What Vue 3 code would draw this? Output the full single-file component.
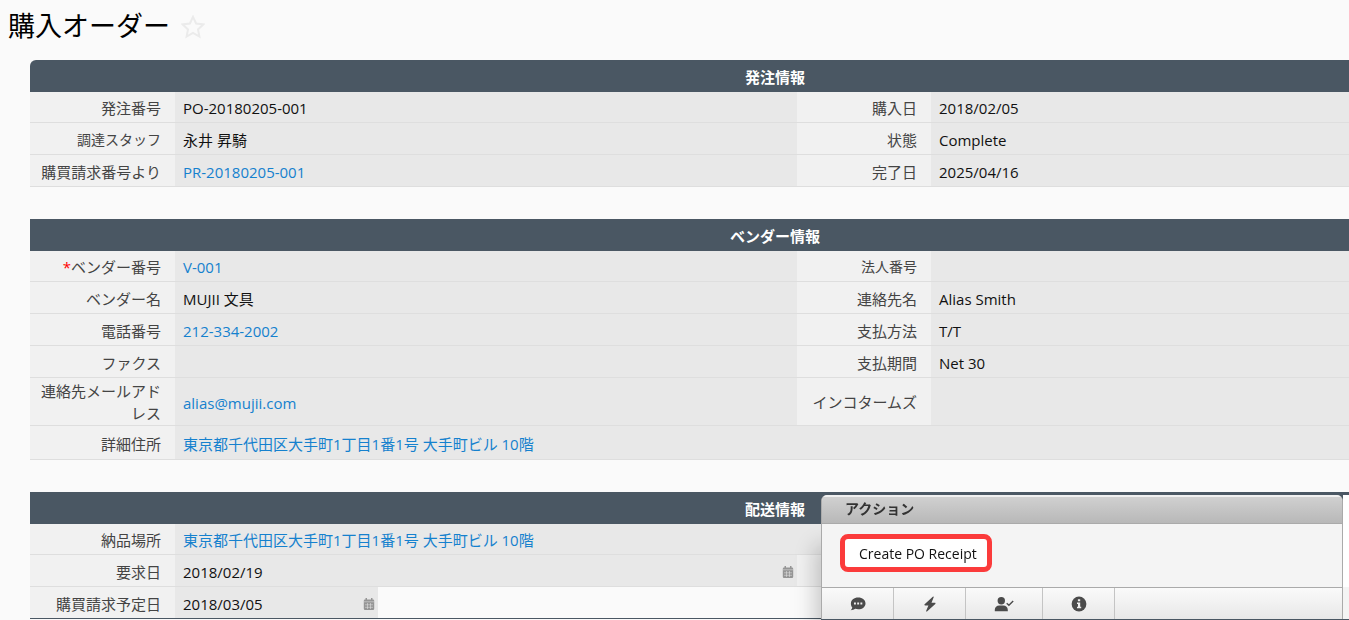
<script setup>
const address = '東京都千代田区大手町1丁目1番1号 大手町ビル 10階'

const sections = [
  {
    title: '発注情報',
    rows: [
      { cells: [{ label: '発注番号', value: 'PO-20180205-001' }, { label: '購入日', value: '2018/02/05' }] },
      { cells: [{ label: '調達スタッフ', value: '永井 昇騎', small: true }, { label: '状態', value: 'Complete' }] },
      { cells: [{ label: '購買請求番号より', value: 'PR-20180205-001', link: true }, { label: '完了日', value: '2025/04/16' }] },
    ],
  },
  {
    title: 'ベンダー情報',
    rows: [
      { cells: [{ label: 'ベンダー番号', value: 'V-001', link: true, required: true }, { label: '法人番号', value: '', small: true }] },
      { cells: [{ label: 'ベンダー名', value: 'MUJII 文具' }, { label: '連絡先名', value: 'Alias Smith' }] },
      { cells: [{ label: '電話番号', value: '212-334-2002', link: true }, { label: '支払方法', value: 'T/T' }] },
      { cells: [{ label: 'ファクス', value: '' }, { label: '支払期間', value: 'Net 30' }] },
      { cells: [{ label: '連絡先メールアドレス', value: 'alias@mujii.com', link: true }, { label: 'インコタームズ', value: '' }], kind: 'double' },
      { cells: [{ label: '詳細住所', value: address, link: true, span: 3 }], kind: 'roomy' },
    ],
  },
  {
    title: '配送情報',
    rows: [
      { cells: [{ label: '納品場所', value: address, link: true, span: 3 }] },
      { cells: [{ label: '要求日', value: '2018/02/19', date: true }, { label: '', value: '' }] },
      { cells: [{ label: '購買請求予定日', value: '2018/03/05', date: true, narrow: true, span: 3 }], kind: 'last' },
    ],
  },
]
</script>

<template>
  <main class="page">
    <header class="title">
      <h1>購入オーダー</h1>
      <button class="star" type="button" aria-label="お気に入り">
        <svg viewBox="0 0 24 24" width="24" height="24"><path d="M12 1.8l3.1 6.7 7.3.9-5.4 5 1.4 7.2-6.4-3.6-6.4 3.6L7 14.400l-5.400-5 7.300-.9z" /></svg>
      </button>
    </header>

    <div class="sections">
      <table v-for="s in sections" :key="s.title">
        <colgroup><col class="c-label" /><col class="c-value" /><col class="c-label2" /><col /></colgroup>
        <thead>
          <tr><th colspan="4" scope="colgroup">{{ s.title }}</th></tr>
        </thead>
        <tbody>
          <tr v-for="(r, i) in s.rows" :key="i" :class="r.kind">
            <template v-for="(c, j) in r.cells" :key="j">
              <th scope="row" :class="{ small: c.small }"><span v-if="c.required" class="req">*</span>{{ c.label }}</th>
              <td :colspan="c.span || 1" :class="{ dated: c.date, open: c.narrow }">
                <div v-if="c.date" class="date" :class="{ narrow: c.narrow }">
                  <span>{{ c.value }}</span>
                  <button type="button" class="cal" :aria-label="c.label">
                    <svg viewBox="0 0 12 12" width="12" height="12">
                      <path fill="#959595" d="M2.500 0h1.500v1.500h4V0h1.500v1.500h.5a1.200 1.200 0 0 1 1.200 1.200v8.100A1.200 1.200 0 0 1 10 12H2A1.200 1.200 0 0 1 .8 10.800V2.700A1.200 1.200 0 0 1 2 1.500h.5z" />
                      <path stroke="#e8e8e8" stroke-width=".5" fill="none" d="M.8 3.800h10.400M2 6.800h8M2 9.300h8M4.500 5v6M7.500 5v6" />
                    </svg>
                  </button>
                </div>
                <a v-else-if="c.link" href="#">{{ c.value }}</a>
                <template v-else>{{ c.value }}</template>
              </td>
            </template>
          </tr>
        </tbody>
      </table>
    </div>

    <aside class="dock">
      <section class="panel">
        <h2>アクション</h2>
        <div class="body"><button type="button" class="action">Create PO Receipt</button></div>
        <nav>
          <button type="button" class="tool" aria-label="コメント">
            <svg viewBox="0 0 16 16" width="16" height="16">
              <path fill="#4b4b4b" d="M8.200 1.500c4.200 0 7.300 2.500 7.300 5.900s-3.100 5.900-7.300 5.900c-1 0-2-.2-2.900-.5-1.200.9-2.800 1.400-4.600 1.500.8-.8 1.400-1.700 1.600-2.800C1.400 10.400.9 9 .9 7.400c0-3.400 3.100-5.900 7.300-5.900z" />
              <path fill="#eee" d="M4 6.500h1.900v1.900H4zM7.200 6.500h1.900v1.900H7.200zM10.400 6.500h1.900v1.900h-1.900z" />
            </svg>
          </button>
          <button type="button" class="tool" aria-label="ワークフロー">
            <svg viewBox="0 0 16 16" width="16" height="16"><path fill="#4b4b4b" d="M10.800.8L2.600 8.300c-.5.500-.2 1.200.5 1.200h3.300l-2.300 5.400c-.2.600.4.900.9.500l8.300-7.500c.5-.5.200-1.200-.5-1.200H9.500l2.200-5.400c.2-.6-.4-.9-.9-.5z" /></svg>
          </button>
          <button type="button" class="tool wide" aria-label="承認">
            <svg viewBox="0 0 20 16" width="20" height="16">
              <circle cx="7.300" cy="4.800" r="3.700" fill="#4b4b4b" />
              <path fill="#4b4b4b" d="M.8 15.200v-1.400c0-2.700 1.900-4.300 4.500-4.300h4c2.600 0 4.500 1.600 4.500 4.300v1.400z" />
              <path fill="none" stroke="#4b4b4b" stroke-width="1.400" d="M12.700 7.200l2.200 2.100 4.300-4.300" />
            </svg>
          </button>
          <button type="button" class="tool" aria-label="情報">
            <svg viewBox="0 0 16 16" width="16" height="16">
              <circle cx="8" cy="8" r="7.400" fill="#4b4b4b" />
              <path fill="#eee" d="M6.900 3.300h2.300v2H6.900zM6 6.500h3.200v4.200h1v1.500H6v-1.500h1V8H6z" />
            </svg>
          </button>
        </nav>
      </section>
    </aside>
  </main>
</template>

<style>
body {
  background: #fafafa;
}
</style>

<style scoped>
.page {
  height: 100vh;
  overflow: hidden;
  color: #111;
  font: 15px/22px "Open Sans", "Noto Sans CJK JP", sans-serif;
}
button {
  font: inherit;
  border: 0;
  padding: 0;
  background: none;
}
.title {
  display: flex;
  align-items: center;
  gap: 11px;
  height: 52px;
  padding-left: 8px;
}
h1 {
  margin: 0;
  padding-bottom: 2px;
  color: #000;
  font: 400 27px/32px "Noto Sans CJK JP", sans-serif;
}
.star {
  display: flex;
  padding-top: 2px;
}
.star path {
  fill: none;
  stroke: #ebebeb;
  stroke-width: 2;
}
.sections {
  display: flex;
  flex-direction: column;
  gap: 32px;
  margin: 8px -171px 0 30px;
}
table {
  width: 100%;
  table-layout: fixed;
  border-collapse: separate;
  border-spacing: 0;
}
.c-label {
  width: 145px;
}
.c-value {
  width: 622px;
}
.c-label2 {
  width: 134px;
}
thead th {
  box-sizing: border-box;
  height: 32px;
  padding: 1px 0 0;
  background: #4a5763;
  color: #fff;
  font-weight: 700;
  text-align: center;
}
table:first-child thead th {
  border-top-left-radius: 6px;
}
tbody th,
td {
  box-sizing: border-box;
  height: 32px;
  border-bottom: 1px solid #dedede;
}
tbody tr:first-child > * {
  height: 31px;
}
tbody .double > * {
  height: 48px;
}
tbody .roomy > * {
  height: 34px;
}
tbody .last > * {
  border-bottom-color: #4a5763;
}
tbody th {
  padding: 2px 14px 0 8px;
  background: #f1f1f1;
  color: #444;
  font-weight: 400;
  text-align: right;
}
tbody .double th {
  padding-top: 0;
}
tbody th.small {
  font-size: 14px;
}
td {
  padding: 2px 8px 0;
  background: #e8e8e8;
}
td.dated {
  padding-right: 3px;
}
td.open {
  padding: 0;
  background: #fafafa;
}
a {
  color: #1581ce;
  text-decoration: none;
}
.req {
  color: #f00;
}
.date {
  display: flex;
  align-items: center;
  justify-content: space-between;
}
.date.narrow {
  box-sizing: border-box;
  width: 203px;
  height: 31px;
  padding: 2px 3px 0 8px;
  background: #e8e8e8;
}
.cal {
  display: flex;
}
.dock {
  position: fixed;
  right: 0;
  bottom: 0;
  width: 528px;
  box-sizing: border-box;
  padding-right: 6px;
  border-bottom: 1px solid #4a5763;
  background: linear-gradient(#fff 92px, #f4f4f4 92px) right / 6px 100% no-repeat;
  box-shadow: -6px 50px 20px rgba(0, 0, 0, 0.2);
}
.panel {
  border: solid #aaa;
  border-width: 0 1px;
  border-radius: 6px 6px 0 0;
  overflow: hidden;
  background: #f4f4f4;
}
h2 {
  margin: 0;
  box-sizing: border-box;
  height: 29px;
  padding-left: 23px;
  border-top: 2px solid #f0f0f0;
  border-bottom: 1px solid #aaa;
  background: linear-gradient(#d0d0d0, #b8b8b8);
  color: #333;
  font: 700 14px/24px "Open Sans", "Noto Sans CJK JP", sans-serif;
}
.body {
  padding: 10px 18px 15px;
}
.action {
  display: block;
  padding: 6px 10px 4px 14px;
  height: 38px;
  border: 5px solid #fb3b3b;
  border-radius: 8px;
  background: #fff;
  color: #111;
  font-size: 14px;
  line-height: 18px;
}
nav {
  display: flex;
  height: 31px;
  border-top: 1px solid #aaa;
  background: linear-gradient(#fafafa, #e8e8e8);
}
.tool {
  display: flex;
  align-items: center;
  justify-content: center;
  box-sizing: border-box;
  width: 72px;
  border-right: 1px solid #c4c4c4;
}
.tool.wide {
  width: 77px;
}
</style>
